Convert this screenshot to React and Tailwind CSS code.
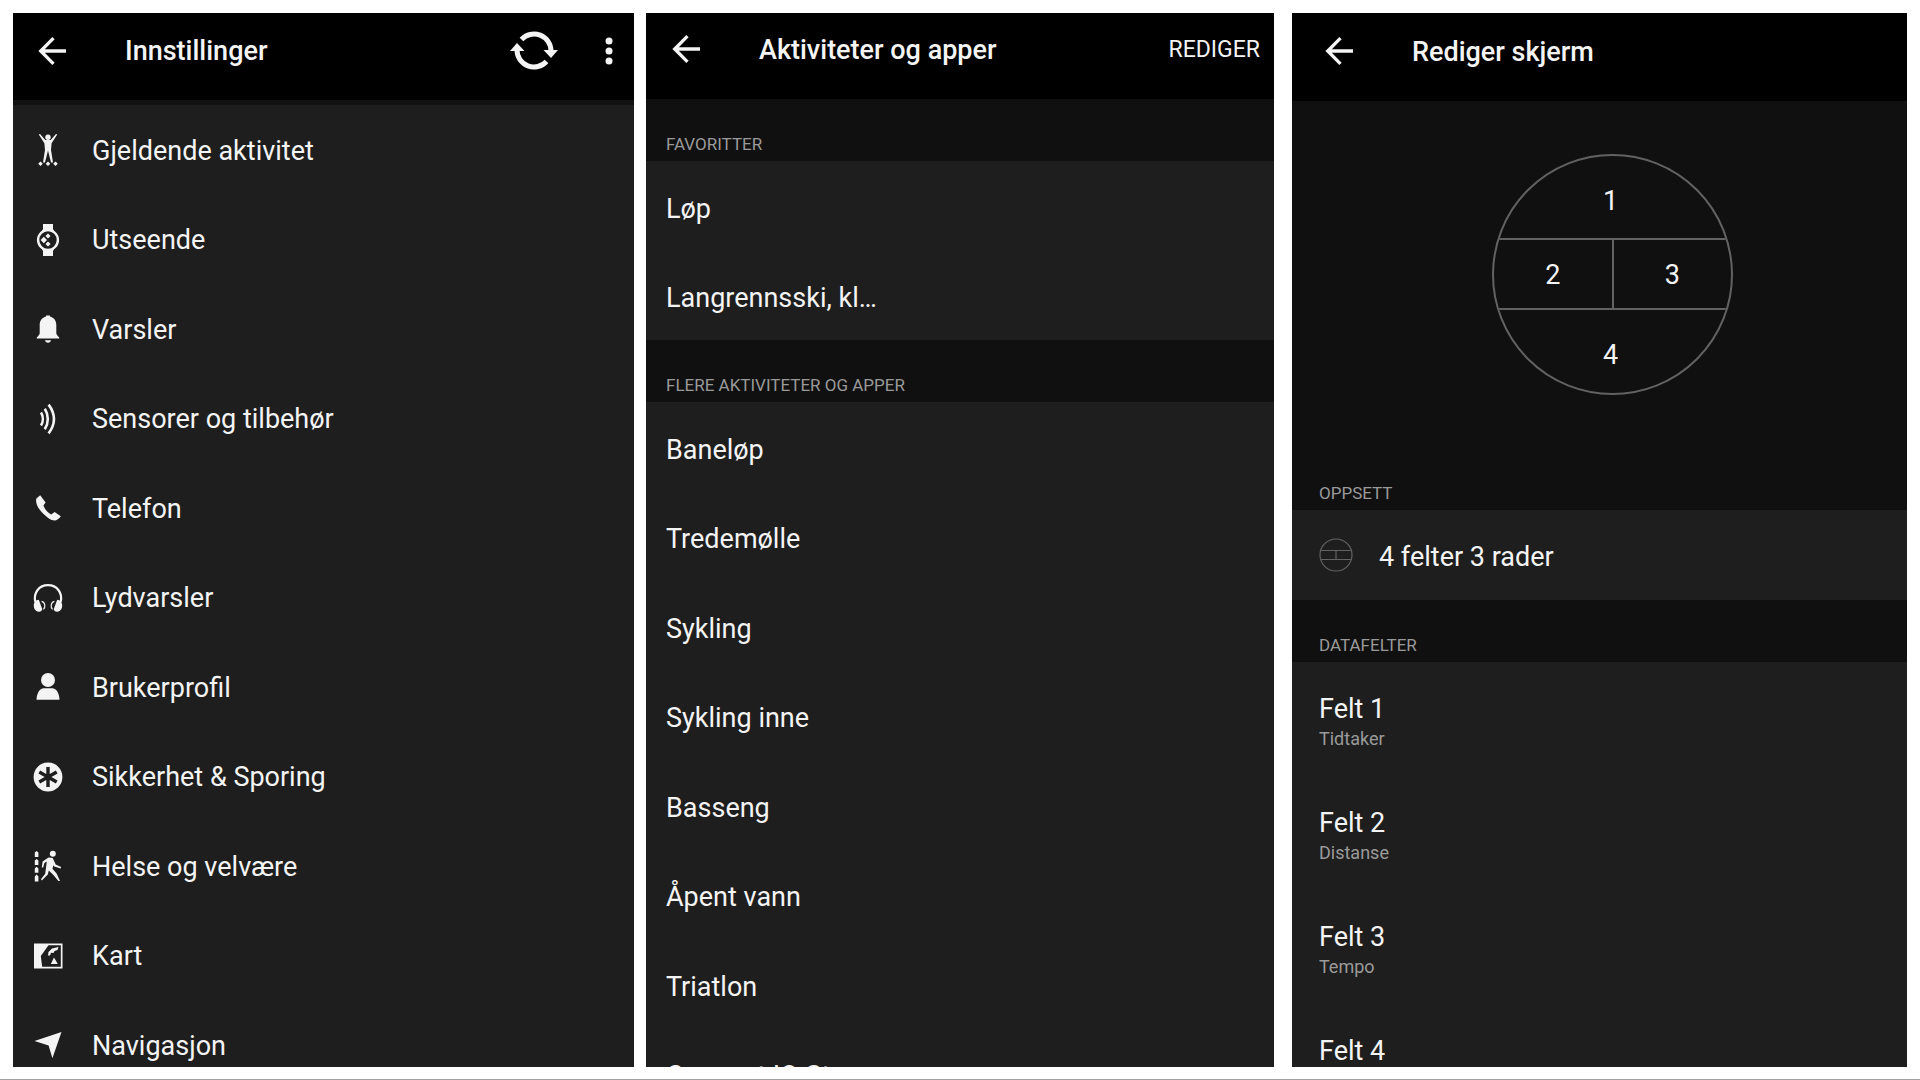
import { useId } from 'react';

const svgProps = { viewBox: '0 0 32 32', fill: 'currentColor', className: 'h-8 w-8 shrink-0', 'aria-hidden': true };

const Icon = {
  activity: (
    <svg {...svgProps}>
      <circle cx="16" cy="3.200" r="2.700" />
      <path d="M6.800.6 8 0l5.300 6h5.400L24 0l1.200.6-5.600 8.600-.6 6.800 2 12.600h-2L16 16.500l-3 12.100h-2L13 16l-.6-6.800z" />
      <path d="m8.500 27.400 2.300 2.300L8.500 32l-2.300-2.300zM16 27.400l2.300 2.300L16 32l-2.300-2.300zM23.500 27.400l2.300 2.300-2.300 2.300-2.300-2.300z" />
    </svg>
  ),
  watch: (
    <svg {...svgProps}>
      <path d="M11 0h10v5l1.500 3h-13L11 5zM11 32h10v-5l1.500-3h-13L11 27z" />
      <circle cx="16" cy="16" r="9.900" fill="#1e1e1e" stroke="currentColor" strokeWidth="2.400" />
      <path d="m11.800 12.800 3.200 3.200-3.200 3.200L8.600 16zM16 9.400l2.600 2.600-2.600 2.600-2.600-2.600zM16 17.400l2.600 2.600-2.600 2.600-2.600-2.600z" />
    </svg>
  ),
  bell: (
    <svg {...svgProps}>
      <path d="M14 3.600V2.500h4v1.100c4 1 6.300 4.200 6.300 8.400v8.800l1.800 2.700c.8.5 1.200.9 1.200 2.100H4.700c0-1.200.4-1.600 1.200-2.100l1.800-2.700V12c0-4.200 2.300-7.400 6.300-8.400z" />
      <path d="M13 27.200h6c-.2 1.600-1.400 2.500-3 2.500s-2.800-.9-3-2.500z" />
    </svg>
  ),
  sensor: (
    <svg {...svgProps} fill="none" stroke="currentColor" strokeWidth="2.600">
      <path d="M9 9.500c2.400 3.800 2.400 9.200 0 13M12.800 5.800c4 6.200 4 14.200 0 20.400M16.600 1.600c7 9.400 7 19.400 0 28.800" />
    </svg>
  ),
  phone: (
    <svg {...svgProps}>
      <path d="M8.200 3.200 4.400 6.600c-1 3 .4 8.400 5.400 13.600s9.600 8.600 13.400 8.200c1.800-.2 4.400-2.400 5.600-4.200L22.600 20l-3.400 2.600c-3.400-1.800-6.400-5.200-7.800-9l2.200-3.200z" />
    </svg>
  ),
  headphones: (
    <svg {...svgProps}>
      <path d="M3.400 20C1 11 7 3.200 16 3.200S31 11 28.600 20" fill="none" stroke="currentColor" strokeWidth="2.200" />
      <path d="M6.800 17.800c-3 .2-5 2.600-5 5.800 0 3.400 2 6 5 6.200 1.600.2 3.600-1.200 3.400-2.800zM25.200 17.800c3 .2 5 2.600 5 5.800 0 3.400-2 6-5 6.200-1.600.2-3.600-1.200-3.400-2.800z" />
      <path d="M9.600 19.400c3.600.6 4.200 6 1.800 8M22.400 19.400c-3.600.6-4.200 6-1.800 8" fill="none" stroke="currentColor" strokeWidth="1.200" />
    </svg>
  ),
  user: (
    <svg {...svgProps}>
      <circle cx="16" cy="9" r="7" />
      <path d="M4.500 28.700c.2-6 2.800-10.900 6.600-11.500h9.800c3.800.6 6.400 5.500 6.600 11.500z" />
    </svg>
  ),
  safety: (
    <svg {...svgProps}>
      <circle cx="16" cy="16" r="14.400" />
      <path d="M16 6v20M7.300 11l17.400 10M24.700 11 7.300 21" stroke="#1e1e1e" strokeWidth="3.400" />
    </svg>
  ),
  health: (
    <svg {...svgProps}>
      <path d="M2.800 7V2.600L4.600 1l1.800 1.600V7zM2.800 15v-4.400L4.600 9l1.800 1.600V15zM2.800 22.800v-4.400l1.800-1.600 1.800 1.600v4.400zM2.800 31.400v-5l1.800-1.800 1.800 1.800v5z" />
      <circle cx="20.800" cy="3.800" r="3" />
      <path d="m16.500 7.600 4.200.4 3 6.400 5.400 2.600-.4 1.400-6.500-2-.8-1.200-1 3.600 4.200 4.800 3.400 7.400h-1.600l-5-6-4.600-4.400-1 4-6 5.800-.8-1.200 4.200-5.400 1.200-9.200.4-3.200-2.400 1.600-1.200 4.600-1.400-.2.800-5.800z" />
    </svg>
  ),
  map: (
    <svg {...svgProps}>
      <path d="M2 3.500h28.500v25H2z" />
      <path d="M16.500 5.300h12.300v21.500H10.200L8.800 16z" fill="#1e1e1e" />
      <path d="m16 15.500.5-3.500L20 8.500 26.500 7l-1 3-3 1-1 2-2.500-.3L18 15.500zM22 17.500l3.800 6.500h-7z" />
    </svg>
  ),
  navigation: (
    <svg {...svgProps}>
      <path d="M29.500 3 20.400 29.200 16.600 16.400 2.500 12z" />
    </svg>
  ),
};

const settings = [
  ['activity', 'Gjeldende aktivitet'],
  ['watch', 'Utseende'],
  ['bell', 'Varsler'],
  ['sensor', 'Sensorer og tilbehør'],
  ['phone', 'Telefon'],
  ['headphones', 'Lydvarsler'],
  ['user', 'Brukerprofil'],
  ['safety', 'Sikkerhet & Sporing'],
  ['health', 'Helse og velvære'],
  ['map', 'Kart'],
  ['navigation', 'Navigasjon'],
];

const favourites = ['Løp', 'Langrennsski, kl…'];

const activities = ['Baneløp', 'Tredemølle', 'Sykling', 'Sykling inne', 'Basseng', 'Åpent vann', 'Triatlon', 'Connect IQ Store'];

const fields = [
  ['Felt 1', 'Tidtaker'],
  ['Felt 2', 'Distanse'],
  ['Felt 3', 'Tempo'],
  ['Felt 4', ''],
];

function BackButton() {
  return (
    <button type="button" aria-label="Tilbake" className="shrink-0">
      <svg viewBox="0 0 32 32" fill="none" stroke="currentColor" strokeWidth="3.300" className="h-8 w-8" aria-hidden="true">
        <path d="M29 16H4M16.500 3.200 3.700 16l12.800 12.800" />
      </svg>
    </button>
  );
}

function Title({ children }) {
  return <h1 className="ml-14 flex-1 pt-0.5 font-medium">{children}</h1>;
}

function SectionLabel({ id, className = 'px-5', children }) {
  return (
    <h2 id={id} className={`h-[62px] pt-[35px] text-[17px] leading-5 text-[#9a9a9a] ${className}`}>
      {children}
    </h2>
  );
}

function ActivityList({ label, items }) {
  const id = useId();

  return (
    <section aria-labelledby={id}>
      <SectionLabel id={id}>{label}</SectionLabel>
      <ul className="bg-[#1e1e1e]">
        {items.map((item) => (
          <li key={item} className="odd:h-[90px] even:h-[89px]">
            <button type="button" className="flex h-full w-full items-center px-5 pt-1.5 text-left">
              {item}
            </button>
          </li>
        ))}
      </ul>
    </section>
  );
}

function SettingsScreen() {
  return (
    <section className="flex min-w-0 flex-[621_1_0%] flex-col overflow-hidden bg-[#1e1e1e]">
      <header className="flex h-[92px] shrink-0 items-center border-b-5 border-[#121212] bg-black pr-[21px] pb-3 pl-6">
        <BackButton />
        <Title>Innstillinger</Title>
        <button type="button" aria-label="Synkroniser" className="mr-[47px]">
          <svg viewBox="0 0 48 40" fill="none" stroke="currentColor" strokeWidth="5" className="h-10 w-12" aria-hidden="true">
            <path d="M11.500 8.500A17 17 0 0 1 41 20M36.500 30.500A17 17 0 0 1 7 19" />
            <path d="M33.500 19H48l-7 8zM0 20h14.500L7 12z" fill="currentColor" stroke="none" />
          </svg>
        </button>
        <button type="button" aria-label="Flere valg">
          <svg viewBox="0 0 8 28" fill="currentColor" className="h-7 w-2" aria-hidden="true">
            <circle cx="4" cy="4" r="3.500" /><circle cx="4" cy="14" r="3.500" /><circle cx="4" cy="24" r="3.500" />
          </svg>
        </button>
      </header>
      <ul>
        {settings.map(([icon, text]) => (
          <li key={text} className="odd:h-[90px] even:h-[89px]">
            <button type="button" className="flex h-full w-full items-center gap-7 px-[19px] text-left">
              {Icon[icon]}
              <span className="pt-0.5">{text}</span>
            </button>
          </li>
        ))}
      </ul>
    </section>
  );
}

function ActivitiesScreen() {
  return (
    <section className="ml-3 min-w-0 flex-[628_1_0%] overflow-hidden bg-[#101010]">
      <header className="flex h-[86px] items-center bg-black pr-[14px] pb-[14px] pl-[25px]">
        <BackButton />
        <Title>Aktiviteter og apper</Title>
        <button type="button" className="pt-0.5 text-[23px]">REDIGER</button>
      </header>
      <ActivityList label="FAVORITTER" items={favourites} />
      <ActivityList label="FLERE AKTIVITETER OG APPER" items={activities} />
    </section>
  );
}

function EditScreen() {
  return (
    <section className="ml-[18px] min-w-0 flex-[615_1_0%] overflow-hidden bg-[#101010]">
      <header className="flex h-[88px] items-center bg-black pb-3 pl-8">
        <BackButton />
        <Title>Rediger skjerm</Title>
      </header>

      {/* Watch face preview with numbered data fields */}
      <div className="flex h-[347px] justify-center pt-[53px] pl-[26px]">
        <div className="grid h-[241px] w-[241px] grid-cols-2 grid-rows-[82px_72px_1fr] overflow-hidden rounded-full border-2 border-[#626262] text-center leading-10">
          <div className="col-span-2 pt-[25px] pr-1">1</div>
          <div className="border-y-2 border-r border-[#626262] pt-[15px]">2</div>
          <div className="border-y-2 border-l border-[#626262] pt-[15px]">3</div>
          <div className="col-span-2 pt-[25px] pr-1">4</div>
        </div>
      </div>

      <SectionLabel className="px-[27px]">OPPSETT</SectionLabel>
      <button type="button" className="flex h-[90px] w-full items-center gap-[26px] bg-[#1e1e1e] px-[27px] text-left">
        <svg viewBox="0 0 34 34" fill="none" stroke="#626262" strokeWidth="1.200" className="h-[34px] w-[34px]" aria-hidden="true">
          <circle cx="17" cy="17" r="16" />
          <path d="M1.500 12.500h31M1.500 21.500h31M17 12.500v9" />
        </svg>
        <span className="pt-1">4 felter 3 rader</span>
      </button>

      <SectionLabel className="px-[27px]">DATAFELTER</SectionLabel>
      <ul className="bg-[#1e1e1e]">
        {fields.map(([name, value]) => (
          <li key={name}>
            <button type="button" className="flex h-[114px] w-full flex-col px-[27px] pt-[31px] text-left">
              <span className="leading-8">{name}</span>
              {value && <span className="text-lg text-[#9a9a9a]">{value}</span>}
            </button>
          </li>
        ))}
      </ul>
    </section>
  );
}

export default function App() {
  return (
    <main className="flex h-screen border-b border-[#a0a0a0] bg-white px-[13px] pt-[13px] pb-3 font-[Roboto,sans-serif] text-[27px] text-[#f4f4f4]">
      <SettingsScreen />
      <ActivitiesScreen />
      <EditScreen />
    </main>
  );
}
